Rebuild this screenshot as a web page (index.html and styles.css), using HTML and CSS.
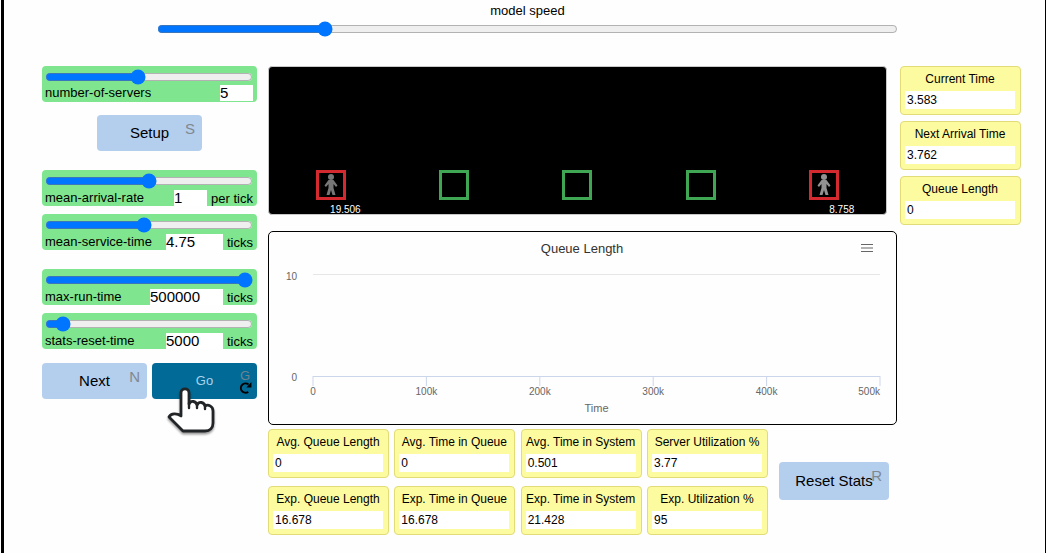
FILE: index.html
```html
<!DOCTYPE html>
<html lang="en">
<head>
<meta charset="utf-8">
<meta name="viewport" content="width=device-width, initial-scale=1">
<title>Queue model</title>
<link rel="stylesheet" href="styles.css">
</head>
<body>
<main class="model">
  <div class="speed">
    <label class="speed-label" for="speed">model speed</label>
    <input class="range" id="speed" type="range" min="0" max="100" value="22">
  </div>

  <div class="widgets">
    <section class="controls">
      <div class="slider">
        <input class="range" type="range" id="servers" min="1" max="10" value="5">
        <div class="slider-row">
          <label class="slider-name" for="servers">number-of-servers</label>
          <input class="slider-value value-small" aria-label="number-of-servers value" type="text" value="5">
        </div>
      </div>

      <button class="btn btn-setup" type="button">Setup<span class="key">S</span></button>

      <div class="slider-group">
        <div class="slider">
          <input class="range" type="range" id="arrival" min="0" max="2" step="0.01" value="1">
          <div class="slider-row">
            <label class="slider-name" for="arrival">mean-arrival-rate</label>
            <input class="slider-value value-small" aria-label="mean-arrival-rate value" type="text" value="1">
            <span class="unit">per tick</span>
          </div>
        </div>
        <div class="slider">
          <input class="range" type="range" id="service" min="0" max="10" step="0.01" value="4.75">
          <div class="slider-row">
            <label class="slider-name" for="service">mean-service-time</label>
            <input class="slider-value value-medium" aria-label="mean-service-time value" type="text" value="4.75">
            <span class="unit">ticks</span>
          </div>
        </div>
      </div>

      <div class="slider-group">
        <div class="slider">
          <input class="range" type="range" id="runtime" min="0" max="500000" value="500000">
          <div class="slider-row">
            <label class="slider-name" for="runtime">max-run-time</label>
            <input class="slider-value value-large" aria-label="max-run-time value" type="text" value="500000">
            <span class="unit">ticks</span>
          </div>
        </div>
        <div class="slider">
          <input class="range" type="range" id="reset" min="0" max="100000" value="5000">
          <div class="slider-row">
            <label class="slider-name" for="reset">stats-reset-time</label>
            <input class="slider-value value-medium" aria-label="stats-reset-time value" type="text" value="5000">
            <span class="unit">ticks</span>
          </div>
        </div>
      </div>

      <div class="run-buttons">
        <button class="btn" type="button">Next<span class="key">N</span></button>
        <button class="btn btn-active" type="button">Go<span class="key">G</span>
          <svg class="forever" viewBox="0 0 12 12" aria-hidden="true"><path d="M8.500 10A4.300 4.300 0 1 1 8.800 3.200" fill="none" stroke="#000" stroke-width="1.800"/><path d="M11.500 1V6H6.800Z"/></svg>
        </button>
        <svg class="pointer" viewBox="0 0 50 50" aria-hidden="true">
          <path d="M14 30V7C14 1.500 22 1.500 22 7V18C24 14 29 15 30 19C32 15 37 16 38 20C41 18 46 20 46 25V37C46 42 43 45 38 45H16L2 31C4 27 10 27 14 30Z" fill="#fff" stroke="#222528" stroke-width="2.800" stroke-linejoin="round"/>
          <path d="M22 17V22M30 18V22M38 19V23" fill="none" stroke="#222528" stroke-width="2.400" stroke-linecap="round"/>
        </svg>
      </div>
    </section>

    <section class="center">
      <div class="world">
        <div class="station">
          <span class="server busy"><svg class="person" viewBox="0 0 14 22" aria-hidden="true"><circle cx="7" cy="3" r="3"/><path d="M4.500 6H9.500L13.500 11.500L12 13L9.500 10V14L11.500 21H8.500L7 16L5.500 21H2.500L4.500 14V10L2 13L0.500 11.500Z"/></svg></span>
          <span class="due">19.506</span>
        </div>
        <div class="station"><span class="server"></span></div>
        <div class="station"><span class="server"></span></div>
        <div class="station"><span class="server"></span></div>
        <div class="station">
          <span class="server busy"><svg class="person person-light" viewBox="0 0 14 22" aria-hidden="true"><circle cx="7" cy="3" r="3"/><path d="M4.500 6H9.500L13.500 11.500L12 13L9.500 10V14L11.500 21H8.500L7 16L5.500 21H2.500L4.500 14V10L2 13L0.500 11.500Z"/></svg></span>
          <span class="due">8.758</span>
        </div>
      </div>

      <div class="plot">
        <header class="plot-head">
          <h2 class="plot-title">Queue Length</h2>
          <button class="plot-menu" type="button" aria-label="Chart menu"><svg class="menu-icon" viewBox="0 0 14 10" aria-hidden="true"><path d="M1 1.500H13M1 5H13M1 8.500H13" stroke="#666" fill="none"/></svg></button>
        </header>
        <svg class="axes" role="img" aria-label="Queue length over time">
          <line class="grid-line" x1="0" x2="100%" y1="14.500" y2="14.500"/>
          <line class="axis-line" x1="0" x2="100%" y1="116.500" y2="116.500"/>
          <line class="axis-line" x1="0" x2="0" y1="116" y2="126"/>
          <line class="axis-line" x1="20%" x2="20%" y1="116" y2="126"/>
          <line class="axis-line" x1="40%" x2="40%" y1="116" y2="126"/>
          <line class="axis-line" x1="60%" x2="60%" y1="116" y2="126"/>
          <line class="axis-line" x1="80%" x2="80%" y1="116" y2="126"/>
          <line class="axis-line" x1="100%" x2="100%" y1="116" y2="126"/>
          <text class="tick end" x="-16" y="20">10</text>
          <text class="tick end" x="-16" y="121">0</text>
          <text class="tick" x="0" y="135">0</text>
          <text class="tick" x="20%" y="135">100k</text>
          <text class="tick" x="40%" y="135">200k</text>
          <text class="tick" x="60%" y="135">300k</text>
          <text class="tick" x="80%" y="135">400k</text>
          <text class="tick end" x="100%" y="135">500k</text>
          <text class="axis-title" x="50%" y="152">Time</text>
        </svg>
      </div>

      <div class="stats">
        <div class="stats-grid">
          <div class="monitor"><label class="monitor-name" for="m1">Avg. Queue Length</label><output class="monitor-value" id="m1">0</output></div>
          <div class="monitor"><label class="monitor-name" for="m2">Avg. Time in Queue</label><output class="monitor-value" id="m2">0</output></div>
          <div class="monitor"><label class="monitor-name" for="m3">Avg. Time in System</label><output class="monitor-value" id="m3">0.501</output></div>
          <div class="monitor"><label class="monitor-name" for="m4">Server Utilization %</label><output class="monitor-value" id="m4">3.77</output></div>
          <div class="monitor"><label class="monitor-name" for="m5">Exp. Queue Length</label><output class="monitor-value" id="m5">16.678</output></div>
          <div class="monitor"><label class="monitor-name" for="m6">Exp. Time in Queue</label><output class="monitor-value" id="m6">16.678</output></div>
          <div class="monitor"><label class="monitor-name" for="m7">Exp. Time in System</label><output class="monitor-value" id="m7">21.428</output></div>
          <div class="monitor"><label class="monitor-name" for="m8">Exp. Utilization %</label><output class="monitor-value" id="m8">95</output></div>
        </div>
        <button class="btn btn-reset" type="button">Reset Stats<span class="key">R</span></button>
      </div>
    </section>

    <section class="monitors">
      <div class="monitor"><label class="monitor-name" for="m9">Current Time</label><output class="monitor-value" id="m9">3.583</output></div>
      <div class="monitor"><label class="monitor-name" for="m10">Next Arrival Time</label><output class="monitor-value" id="m10">3.762</output></div>
      <div class="monitor"><label class="monitor-name" for="m11">Queue Length</label><output class="monitor-value" id="m11">0</output></div>
    </section>
  </div>
</main>
</body>
</html>
```

FILE: styles.css
```css
* { box-sizing: border-box; }

body {
  margin: 0;
  background: #fefefe;
  color: #000;
  font-family: "Liberation Sans", Arial, sans-serif;
  font-size: 13px;
}

.model {
  min-height: 100vh;
  margin-left: 1px;
  border-left: 3px solid #000;
  border-right: 1px solid #000;
}

.range {
  display: block;
  width: 100%;
  height: 16px;
  margin: 0;
}

.speed {
  padding: 1px 147px 0 153px;
}

.speed-label {
  display: block;
  line-height: 20px;
  text-align: center;
}

.widgets {
  display: grid;
  grid-template-columns: 215px minmax(0, 1fr) 121px;
  padding: 29px 24px 16px 38px;
  align-items: start;
}

/* Sliders and buttons */
.controls {
  display: flex;
  flex-direction: column;
}

.slider {
  height: 36px;
  padding: 3px 4px 0 3px;
  border-radius: 4px;
  background: #7fe58f;
}

.slider-row {
  display: flex;
  height: 16px;
  gap: 4px;
  line-height: 16px;
}

.slider-name {
  flex: 1;
  white-space: nowrap;
}

.slider-value {
  height: 16px;
  padding: 0;
  border: 0;
  background: #fff;
  color: #000;
  font: 15px/16px "Liberation Sans", Arial, sans-serif;
}

.value-small { width: 33px; }
.value-medium { width: 57px; }
.value-large { width: 73px; }

.unit {
  line-height: 18px;
  white-space: nowrap;
}

.slider-group {
  display: flex;
  flex-direction: column;
  gap: 8px;
  margin-top: 19px;
}

.slider-group .slider-row { margin-top: 1px; }

.btn {
  position: relative;
  width: 105px;
  height: 36px;
  padding: 0;
  border: 0;
  border-radius: 4px;
  background: #b4ceed;
  color: #000;
  font: 15px/18px "Liberation Sans", Arial, sans-serif;
  white-space: nowrap;
}

.key {
  position: absolute;
  top: 5px;
  right: 7px;
  color: #808890;
}

.btn-setup {
  align-self: center;
  margin-top: 13px;
}

.run-buttons {
  position: relative;
  display: flex;
  gap: 5px;
  margin-top: 14px;
}

.btn-active {
  background: #026a96;
  color: #a9d4ee;
  font-size: 13px;
}

.btn-active .key {
  top: 4px;
  color: #6b8490;
}

.forever {
  position: absolute;
  top: 18px;
  right: 5px;
  width: 13px;
  height: 13px;
}

.pointer {
  position: absolute;
  top: 23px;
  left: 125px;
  width: 50px;
  height: 50px;
  filter: drop-shadow(0 2px 1px rgba(0, 0, 0, 0.4));
}

/* World view */
.center {
  margin: 0 3px 0 11px;
}

.world {
  display: grid;
  grid-template-columns: repeat(5, 1fr);
  height: 149px;
  margin-right: 10px;
  padding-top: 103px;
  border: 1px solid #c8c8c8;
  border-radius: 4px;
  background: #000;
}

.station {
  display: flex;
  flex-direction: column;
  align-items: center;
}

.server {
  display: flex;
  align-items: center;
  justify-content: center;
  width: 30px;
  height: 30px;
  border: 3px solid #3fa653;
}

.busy { border-color: #d4292f; }

.person {
  width: 14px;
  height: 22px;
  fill: #777;
}

.person-light { fill: #929292; }

.due {
  width: 60px;
  margin-top: 4px;
  color: #fff;
  font-size: 10px;
  line-height: 12px;
  text-align: right;
}

/* Plot */
.plot {
  margin-top: 16px;
  padding: 4px 16px 0 44px;
  border: 1px solid #000;
  border-radius: 5px;
}

.plot-head {
  display: grid;
  grid-template-columns: 1fr auto 1fr;
  align-items: center;
  height: 24px;
  margin-left: -29px;
}

.plot-title {
  grid-column: 2;
  margin: 0;
  color: #333;
  font-size: 13px;
  font-weight: 400;
}

.plot-menu {
  justify-self: end;
  width: 26px;
  height: 22px;
  padding: 0;
  border: 0;
  background: none;
}

.menu-icon {
  display: block;
  width: 14px;
  height: 10px;
  margin: 0 auto;
}

.axes {
  display: block;
  width: 100%;
  height: 164px;
  overflow: visible;
}

.grid-line { stroke: #e6e6e6; }
.axis-line { stroke: #ccd6eb; }

.tick {
  fill: #666;
  font-size: 10px;
  text-anchor: middle;
}

.end { text-anchor: end; }

.axis-title {
  fill: #666;
  font-size: 11px;
  text-anchor: middle;
}

/* Monitors */
.stats {
  display: flex;
  align-items: center;
  gap: 11px;
  margin-top: 4px;
}

.stats-grid {
  display: grid;
  grid-template-columns: repeat(4, 121px);
  justify-content: space-between;
  row-gap: 8px;
  width: 500px;
}

.btn-reset {
  width: 110px;
  height: 38px;
  margin-bottom: 2px;
}

.monitors {
  display: grid;
  gap: 6px;
}

.monitor {
  height: 49px;
  padding: 0 5px 0 4px;
  border: 1px solid #e2dc78;
  border-radius: 4px;
  background: #fdfba0;
  font-size: 12px;
}

.monitor-name {
  display: block;
  line-height: 24px;
  text-align: center;
  white-space: nowrap;
}

.monitor-value {
  display: block;
  height: 18px;
  padding-left: 2px;
  background: #fff;
  line-height: 18px;
}
```
